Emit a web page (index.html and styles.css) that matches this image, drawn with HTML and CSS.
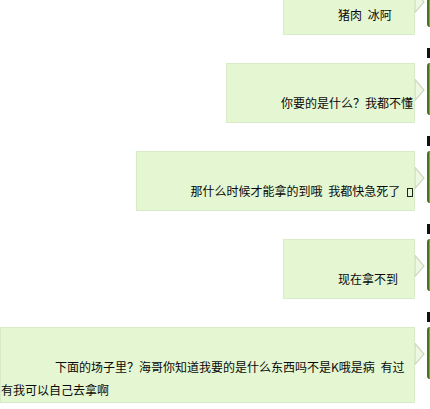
FILE: index.html
```html
<!DOCTYPE html>
<html lang="zh-CN">
<head>
<meta charset="utf-8">
<title>聊天记录</title>
<link rel="stylesheet" href="styles.css">
</head>
<body>
<div class="chat">
  <div class="msg msg--first">
    <div class="bubble">猪肉 冰阿</div>
    <svg class="arrow" width="10" height="22" viewBox="0 0 10 22"><polygon points="0,0.5 9,11 0,21.5"/></svg>
    <div class="side"><span class="side-bar"></span><span class="avatar"></span></div>
  </div>
  <div class="msg">
    <div class="bubble">你要的是什么？我都不懂</div>
    <svg class="arrow" width="10" height="22" viewBox="0 0 10 22"><polygon points="0,0.5 9,11 0,21.5"/></svg>
    <div class="side"><span class="side-bar"></span><span class="avatar"></span></div>
  </div>
  <div class="msg">
    <div class="bubble">那什么时候才能拿的到哦 我都快急死了 <span class="tofu"></span></div>
    <svg class="arrow" width="10" height="22" viewBox="0 0 10 22"><polygon points="0,0.5 9,11 0,21.5"/></svg>
    <div class="side"><span class="side-bar"></span><span class="avatar"></span></div>
  </div>
  <div class="msg">
    <div class="bubble">现在拿不到</div>
    <svg class="arrow" width="10" height="22" viewBox="0 0 10 22"><polygon points="0,0.5 9,11 0,21.5"/></svg>
    <div class="side"><span class="side-bar"></span><span class="avatar"></span></div>
  </div>
  <div class="msg">
    <div class="bubble">下面的场子里？海哥你知道我要的是什么东西吗不是K哦是病 有过有我可以自己去拿啊</div>
    <svg class="arrow" width="10" height="22" viewBox="0 0 10 22"><polygon points="0,0.5 9,11 0,21.5"/></svg>
    <div class="side"><span class="side-bar"></span><span class="avatar"></span></div>
  </div>
</div>
</body>
</html>
```

FILE: styles.css
```css
html, body {
  margin: 0;
  padding: 0;
  background: #ffffff;
  overflow: hidden;
}

body {
  font-family: "Noto Sans CJK SC", "Liberation Sans", sans-serif;
  font-size: 12px;
  color: #0a0a0a;
}

.chat {
  display: flex;
  flex-direction: column;
  gap: 28px;
}

.msg {
  display: flex;
  justify-content: flex-end;
  align-items: flex-start;
}

.msg--first {
  margin-top: -25px;
}

.bubble {
  box-sizing: border-box;
  min-width: 132px;
  max-width: 415px;
  min-height: 60px;
  padding: 27px 1px 1px 0;
  border: 1px solid #d9ecc8;
  background: #e4f6d2;
  text-indent: 54px;
  line-height: 23px;
  word-spacing: 3px;
}

.tofu {
  display: inline-block;
  width: 4px;
  height: 7px;
  border: 1px solid #222;
  vertical-align: -1px;
  margin-left: 1px;
}

.arrow {
  flex: none;
  margin-top: 16px;
  display: block;
}

.arrow polygon {
  fill: #edf7e4;
  stroke: #c9dcb9;
  stroke-width: 1.2;
}

.side {
  flex: none;
  width: 3px;
  margin-left: 2px;
  margin-top: -15px;
  display: flex;
  flex-direction: column;
  gap: 5px;
}

.side-bar {
  display: block;
  height: 10px;
  background: #111111;
}

.avatar {
  display: block;
  height: 52px;
  box-sizing: border-box;
  background: #78a83a;
  border-left: 2px solid #46751a;
  border-radius: 3px 0 0 3px;
}
```
